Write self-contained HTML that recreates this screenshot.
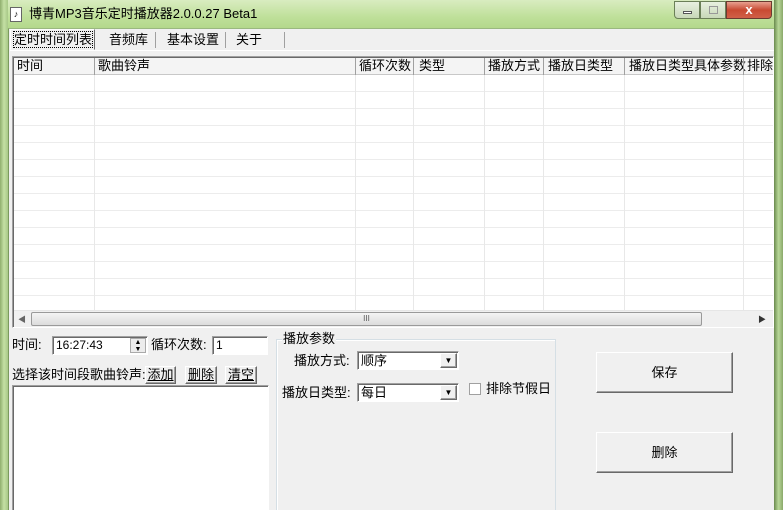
<!DOCTYPE html><html><head><meta charset="utf-8"><style>
*{box-sizing:border-box;margin:0;padding:0}
html,body{width:783px;height:510px;overflow:hidden}
body{background:#f0f0f0;font:12px/15px "Liberation Sans","Noto Sans CJK SC",sans-serif;color:#000;position:relative}
.a{position:absolute}
.sunk{background:#fff;border:1px solid;border-color:#a0a0a0 #fff #fff #a0a0a0;box-shadow:inset 1px 1px 0 #696969}
.btn{background:#f0f0f0;border:1px solid;border-color:#fff #696969 #696969 #fff;box-shadow:inset -1px -1px 0 #a0a0a0;text-align:center}
</style></head><body>
<div class="a" style="left:0;top:0;width:783px;height:28px;background:linear-gradient(#d9ecc0,#bfe09a 60%,#b4d88c)"></div>
<div class="a" style="left:0;top:0;width:8px;height:510px;background:linear-gradient(90deg,#8fae6e,#c4e0a4,#a8c888)"></div>
<div class="a" style="left:774px;top:0;width:9px;height:510px;background:linear-gradient(90deg,#6a8a4e,#b8d898,#8aa86a)"></div>
<div class="a" style="left:8px;top:28px;width:766px;height:482px;background:#f0f0f0;border-left:1px solid #7a9a5e;border-top:1px solid #9ab880"></div>
<div class="a" style="left:10px;top:7px;width:12px;height:15px;background:#fff;border:1px solid #666;font-size:9px;line-height:13px;text-align:center">♪</div>
<div class="a" style="left:29px;top:6px;font-size:13px">博青MP3音乐定时播放器2.0.0.27 Beta1</div>
<div class="a" style="left:674px;top:1px;width:26px;height:18px;border:1px solid #6b7f58;border-radius:0 0 0 4px;background:linear-gradient(#e8f0e0,#c8d8b8)"><div class="a" style="left:8px;top:9px;width:9px;height:3px;background:#fff;border:1px solid #555"></div></div>
<div class="a" style="left:700px;top:1px;width:26px;height:18px;border:1px solid #6b7f58;background:linear-gradient(#e8f0e0,#c8d8b8)"><div class="a" style="left:8px;top:4px;width:9px;height:8px;border:1px solid #999"></div></div>
<div class="a" style="left:726px;top:1px;width:46px;height:18px;border:1px solid #6b3a30;border-radius:0 0 4px 0;background:linear-gradient(#e8a090,#c84a32 50%,#d06048);color:#fff;font-weight:bold;text-align:center;line-height:16px;font-size:13px">x</div>
<div class="a" style="left:10px;top:29px;width:85px;height:21px;border:1px solid;border-color:#fff #696969 #f0f0f0 #fff;font-size:13px;line-height:19px;padding-left:3px"><span style="outline:1px dotted #000">定时时间列表</span></div>
<div class="a" style="left:95px;top:30px;width:190px;height:20px;font-size:13px;line-height:19px">
<span class="a" style="left:14px">音频库</span><span class="a" style="left:60px;top:2px;height:16px;border-left:1px solid #a0a0a0"></span>
<span class="a" style="left:72px">基本设置</span><span class="a" style="left:130px;top:2px;height:16px;border-left:1px solid #a0a0a0"></span>
<span class="a" style="left:141px">关于</span><span class="a" style="left:189px;top:2px;height:16px;border-left:1px solid #a0a0a0"></span></div>
<div class="a" style="left:10px;top:50px;width:764px;height:1px;background:#fff"></div>
<div class="a sunk" style="left:12px;top:56px;width:762px;height:272px;
background:repeating-linear-gradient(#fff 0 16px,#ececec 16px 17px) 0 18px/100% 100% no-repeat,#fff"></div>
<div class="a" style="left:14px;top:58px;width:759px;height:17px;background:#f4f4f4;border-bottom:1px solid #c8c8c8;font-size:13px;line-height:16px;overflow:hidden">
<span class="a" style="left:3px">时间</span><span class="a" style="left:84px">歌曲铃声</span><span class="a" style="left:345px">循环次数</span><span class="a" style="left:405px">类型</span><span class="a" style="left:474px">播放方式</span><span class="a" style="left:534px">播放日类型</span><span class="a" style="left:615px">播放日类型具体参数</span><span class="a" style="left:733px">排除</span>
</div>
<div class="a" style="left:94px;top:58px;width:1px;height:252px;background:#e8e8e8"></div>
<div class="a" style="left:355px;top:58px;width:1px;height:252px;background:#e8e8e8"></div>
<div class="a" style="left:413px;top:58px;width:1px;height:252px;background:#e8e8e8"></div>
<div class="a" style="left:484px;top:58px;width:1px;height:252px;background:#e8e8e8"></div>
<div class="a" style="left:543px;top:58px;width:1px;height:252px;background:#e8e8e8"></div>
<div class="a" style="left:624px;top:58px;width:1px;height:252px;background:#e8e8e8"></div>
<div class="a" style="left:743px;top:58px;width:1px;height:252px;background:#e8e8e8"></div>
<div class="a" style="left:94px;top:58px;width:1px;height:17px;background:#a0a0a0"></div>
<div class="a" style="left:355px;top:58px;width:1px;height:17px;background:#a0a0a0"></div>
<div class="a" style="left:413px;top:58px;width:1px;height:17px;background:#a0a0a0"></div>
<div class="a" style="left:484px;top:58px;width:1px;height:17px;background:#a0a0a0"></div>
<div class="a" style="left:543px;top:58px;width:1px;height:17px;background:#a0a0a0"></div>
<div class="a" style="left:624px;top:58px;width:1px;height:17px;background:#a0a0a0"></div>
<div class="a" style="left:743px;top:58px;width:1px;height:17px;background:#a0a0a0"></div>
<div class="a" style="left:14px;top:310px;width:759px;height:17px;background:#f0f0f0;border-top:1px solid #e6e6e6"></div>
<div class="a" style="left:18px;top:312px;font-size:8px;color:#666">◀</div>
<div class="a" style="left:758px;top:312px;font-size:8px;color:#333">▶</div>
<div class="a" style="left:31px;top:312px;width:671px;height:14px;border:1px solid #9a9a9a;border-radius:2px;background:linear-gradient(#f4f4f4,#dcdcdc);font-size:8px;text-align:center;line-height:12px;color:#555">III</div>
<div class="a" style="left:12px;top:337px;font-size:13px">时间:</div>
<div class="a sunk" style="left:52px;top:336px;width:96px;height:19px;font-size:12px;line-height:17px;padding-left:3px">16:27:43</div>
<div class="a" style="left:130px;top:338px;width:16px;height:15px;background:#ececec;border:1px solid #aaa;font-size:7px;line-height:7px;text-align:center">▲<br>▼</div>
<div class="a" style="left:151px;top:337px;font-size:13px">循环次数:</div>
<div class="a sunk" style="left:212px;top:336px;width:56px;height:19px;line-height:17px;padding-left:3px">1</div>
<div class="a" style="left:12px;top:367px;font-size:13px">选择该时间段歌曲铃声:</div>
<div class="a btn" style="left:145px;top:366px;width:31px;height:18px;line-height:16px;font-size:13px"><u>添加</u></div>
<div class="a btn" style="left:185px;top:366px;width:32px;height:18px;line-height:16px;font-size:13px"><u>删除</u></div>
<div class="a btn" style="left:225px;top:366px;width:32px;height:18px;line-height:16px;font-size:13px"><u>清空</u></div>
<div class="a sunk" style="left:12px;top:385px;width:257px;height:130px"></div>
<div class="a" style="left:276px;top:339px;width:280px;height:180px;border:1px solid #d5dfe5;box-shadow:inset 1px 1px 0 #fff"></div>
<div class="a" style="left:282px;top:331px;padding:0 1px;background:#f0f0f0;font-size:13px">播放参数</div>
<div class="a" style="left:294px;top:353px;font-size:13px">播放方式:</div>
<div class="a sunk" style="left:357px;top:351px;width:102px;height:19px;line-height:17px;padding-left:3px;font-size:13px">顺序</div>
<div class="a btn" style="left:440px;top:353px;width:17px;height:15px;font-size:8px;line-height:13px">▼</div>
<div class="a" style="left:282px;top:385px;font-size:13px">播放日类型:</div>
<div class="a sunk" style="left:357px;top:383px;width:102px;height:19px;line-height:17px;padding-left:3px;font-size:13px">每日</div>
<div class="a btn" style="left:440px;top:385px;width:17px;height:15px;font-size:8px;line-height:13px">▼</div>
<div class="a" style="left:469px;top:383px;width:12px;height:12px;background:#fff;border:1px solid #a0a0a0"></div>
<div class="a" style="left:486px;top:381px;font-size:13px">排除节假日</div>
<div class="a btn" style="left:596px;top:352px;width:137px;height:41px;line-height:39px;font-size:13px">保存</div>
<div class="a btn" style="left:596px;top:432px;width:137px;height:41px;line-height:39px;font-size:13px">删除</div>
</body></html>
